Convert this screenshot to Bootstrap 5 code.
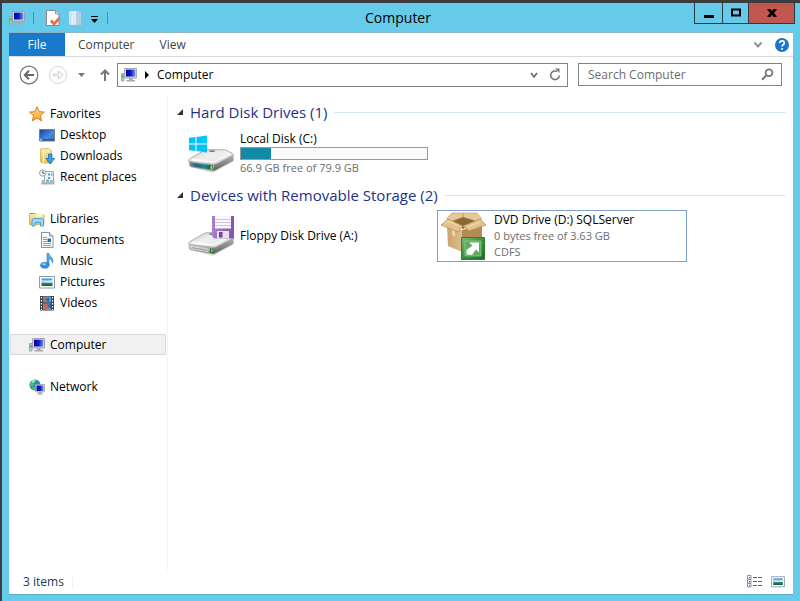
<!DOCTYPE html>
<html lang="en">
<head>
<meta charset="utf-8">
<meta name="viewport" content="width=device-width, initial-scale=1">
<title>Computer</title>
<link href="https://cdn.jsdelivr.net/npm/bootstrap@5.3.0/dist/css/bootstrap.min.css" rel="stylesheet">
<style>
  body { font: 12px/16px "Open Sans", "Noto Sans", sans-serif; background: #3c3c3e; color: #000; }
  .explorer { min-height: 100vh; padding: 3px 0 0 2px; }
  .frame { background: #66cbea; padding: 0 7px 7px; }
  .titlebar { height: 29px; margin-right: -2px; }
  .titlebar h1 { font-size: 14px; line-height: 29px; padding-right: 8px; }
  .titleside { flex: 1 1 0; }
  .quick { gap: 8px; }
  .tool, .plain { border: 0; padding: 0; background: none; display: flex; }
  .sep { width: 1px; height: 12px; background: #60889a; }
  .caption { height: 21px; border: 1px solid #2c3a40; border-top: 0; }
  .caption button { border: 0; background: #66cbea; width: 27px; padding: 0; }
  .caption button + button { border-left: 1px solid #2c3a40; width: 26px; }
  .caption button.shut { background: #c2574f; width: 46px; }
  .pane { background: #fff; border-top: 1px solid #8bb4c4; box-shadow: 0 1px 0 #57a9c4; }
  .ribbon { height: 24px; border-bottom: 1px solid #dadbdc; }
  .ribbon a { line-height: 24px; color: #444; text-decoration: none; padding: 0 12px 0 13px; }
  .ribbon a.file { background: #1979ca; color: #fff; width: 56px; height: 23px; padding: 0; text-align: center; }
  .addressrow { padding: 6px 11px 8px 10px; gap: 10px; }
  .navbtns { height: 24px; gap: 10px; margin-right: -3px; }
  .addr { border: 1px solid #828282; height: 24px; padding: 0 6px 0 3px; gap: 7px; }
  .find { border: 1px solid #828282; height: 23px; width: 204px; padding: 0 7px 0 9px; }
  .find input { border: 0; outline: 0; padding: 0; min-width: 0; color: #000; background: none; }
  .find input::placeholder { color: #6d6d6d; opacity: 1; }
  .side { width: 159px; border-right: 1px solid #f2f2f2; padding: 8px 1px 0; }
  .side ul { margin: 0 0 21px; padding: 0; list-style: none; }
  .side a { display: flex; align-items: center; gap: 5px; height: 21px; padding-left: 18px; color: #000; text-decoration: none; border: 1px solid transparent; }
  .side ul ul { margin: 0; }
  .side ul ul a { padding-left: 28px; }
  .side a.current { background: #f1f1f1; border-color: #d9d9d9; }
  .files { padding: 6px 7px 0 8px; }
  .group { font-size: 15px; line-height: 22px; color: #1e3287; gap: 6px; }
  .group::after { content: ""; flex: 1; height: 1px; background: #d8e8f2; margin-left: 1px; }
  .items { display: grid; grid-template-columns: repeat(auto-fill, 250px); padding-left: 11px; margin: 4px 0 5px; }
  .drive { height: 52px; color: #000; text-decoration: none; border: 1px solid transparent; gap: 5px; padding-right: 8px; }
  .drive.picked { border-color: #7da2ce; gap: 8px; }
  .drive svg.big { margin-left: -1px; }
  .drive.picked svg.big { margin-left: 3px; }
  .soft { color: #6d6d6d; }
  .drive .soft { font-size: 11px; }
  .meter { height: 13px; border: 1px solid #999; border-radius: 0; background: #fafafa; }
  .meter .progress-bar { background: #118aa8; }
  .foot { height: 24px; padding: 0 8px 0 14px; color: #1e395b; }
  .foot .sep { background: #eee; height: 11px; }
</style>
<script src="https://cdn.jsdelivr.net/npm/bootstrap@5.3.0/dist/js/bootstrap.bundle.min.js"></script>
</head>
<body>
<svg width="0" height="0" class="position-absolute" aria-hidden="true">
  <defs>
    <linearGradient id="screen" x1="0" y1="0" x2="1" y2="0"><stop offset="0" stop-color="#0808a0"/><stop offset=".5" stop-color="#0a16c8"/><stop offset="1" stop-color="#6f93ee"/></linearGradient>
    <linearGradient id="desk" x1="0" y1="0" x2="1" y2="1"><stop offset="0" stop-color="#153d9c"/><stop offset=".6" stop-color="#4a8be0"/><stop offset="1" stop-color="#2c60bd"/></linearGradient>
    <linearGradient id="gold" x1="0" y1="0" x2="0" y2="1"><stop offset="0" stop-color="#fdf0ae"/><stop offset="1" stop-color="#e2bd55"/></linearGradient>
    <linearGradient id="starfill" x1="0" y1="0" x2="0" y2="1"><stop offset="0" stop-color="#ffe88c"/><stop offset="1" stop-color="#fb9a22"/></linearGradient>
    <linearGradient id="sky" x1="0" y1="0" x2="0" y2="1"><stop offset="0" stop-color="#2382dd"/><stop offset=".5" stop-color="#c9eefb"/><stop offset=".6" stop-color="#338860"/><stop offset="1" stop-color="#125a48"/></linearGradient>
    <linearGradient id="casetop" x1="0" y1="0" x2="1" y2="1"><stop offset="0" stop-color="#c9c9c9"/><stop offset=".5" stop-color="#f4f4f4"/><stop offset="1" stop-color="#c4c4c4"/></linearGradient>
    <linearGradient id="caseside" x1="0" y1="0" x2="0" y2="1"><stop offset="0" stop-color="#d8d8d8"/><stop offset="1" stop-color="#808080"/></linearGradient>
    <linearGradient id="caseright" x1="0" y1="0" x2="0" y2="1"><stop offset="0" stop-color="#b4b4b4"/><stop offset="1" stop-color="#606060"/></linearGradient>
    <linearGradient id="teal" x1="0" y1="0" x2="1" y2="0"><stop offset="0" stop-color="#6d7f94"/><stop offset=".3" stop-color="#2d6078"/><stop offset=".65" stop-color="#179096"/><stop offset="1" stop-color="#164f35"/></linearGradient>
    <linearGradient id="purple" x1="0" y1="0" x2="1" y2="0"><stop offset="0" stop-color="#a982ce"/><stop offset="1" stop-color="#8453b0"/></linearGradient>
    <linearGradient id="cardL" x1="0" y1="0" x2="1" y2="0"><stop offset="0" stop-color="#c9a26a"/><stop offset="1" stop-color="#dfbf8d"/></linearGradient>
    <linearGradient id="green" x1="0" y1="0" x2="1" y2="1"><stop offset="0" stop-color="#7cbd79"/><stop offset=".5" stop-color="#3a8f3d"/><stop offset="1" stop-color="#1d6b24"/></linearGradient>
    <symbol id="pc" viewBox="0 0 16 16">
      <path d="M0.500 6.500h2.500v7.500h-2.500z" fill="#c5c9cb" stroke="#8a8f92" stroke-width=".7"/><path d="M1 8h1.500v2.500h-1.500z" fill="#35c435"/>
      <path d="M3.500 1.500h12v9.500h-12z" fill="#d5d6da" stroke="#96989f" stroke-width=".8"/><path d="M5 2.700h9.300v6.800H5z" fill="url(#screen)"/>
      <path d="M8 11h3.500v2H14v1.500H5.500V13H8z" fill="#a7a9ac"/>
    </symbol>
    <symbol id="star" viewBox="0 0 16 16"><path d="M8 .8l2.100 4.900 5.300.4-4 3.500 1.300 5.300L8 12l-4.700 2.900 1.300-5.300-4-3.500 5.300-.4z" fill="url(#starfill)" stroke="#e0792e" stroke-linejoin="round"/></symbol>
    <symbol id="desktop" viewBox="0 0 16 16"><path d="M.5 2.500h15v11.500H.5z" fill="url(#desk)" stroke="#707f92"/><path d="M1 12h14v1.500H1z" fill="#3f5271"/><path d="M1 12h2v1.500H1z" fill="#a0d6e9"/></symbol>
    <symbol id="down" viewBox="0 0 16 16"><path d="M1.500 1l8-.5 3 2V15H4l-2.500-1z" fill="url(#gold)" stroke="#d3b057" stroke-width=".8"/><path d="M5 2.500L4.500 15" stroke="#fff6cd"/><path d="M9.500 6h3.500v4.500h2.500L11.300 16 7 10.500h2.500z" fill="#37a3ec" stroke="#1768b3" stroke-width=".8"/></symbol>
    <symbol id="recent" viewBox="0 0 16 16"><path d="M5.500 2.500h9V12h-9z" fill="#eef4f7" stroke="#9cabb4"/><path d="M9 4.500h2v2H9zm3 0h1.500v2H12zM9 8h2v2H9z" fill="#5b9cc9"/><path d="M3 11h12.500v4.500H2z" fill="#aeb5ba"/><path d="M6 10h5v3H6z" fill="#fff"/><path d="M7 10.800h3v1.700H7z" fill="#3ba8aa"/><circle cx="3.700" cy="4" r="3.200" fill="#f3f6f7" stroke="#97a5ae"/><path d="M3.700 2v2.200h2" fill="none" stroke="#54626e"/></symbol>
    <symbol id="library" viewBox="0 0 16 16"><path d="M.5 2.500h6l1 1.500h7.500v9.500H.5z" fill="url(#gold)" stroke="#d4b150" stroke-width=".9"/><path d="M1.500 2.500h3" stroke="#5aa84c"/><path d="M7 4.500h6.500" stroke="#fff8d8" stroke-width="2"/><path d="M3 15V9.500Q3 7.500 5 7.500h7.500Q14.500 7.500 14.500 9.500V15h-3v-3.500h-5.500V15z" fill="#9bd4f2" stroke="#4b9dd0" stroke-width=".9"/></symbol>
    <symbol id="doc" viewBox="0 0 16 16"><path d="M2.500.5h8l3.500 3.500v11.500H2.500z" fill="#fff" stroke="#8192a3"/><path d="M10.500.5V4H14" fill="#d7e0e9" stroke="#8192a3"/><path d="M4 5.500h4M4 7.500h4M4 9.500h4M4 11.500h8M4 13.500h8" stroke="#7290b7" stroke-width=".9"/><path d="M8.500 6.500H12V10H8.500z" fill="#2c69b8"/></symbol>
    <symbol id="music" viewBox="0 0 16 16"><path d="M8 .5h2c0 3 5 4 3.500 9.500-.3-2.500-1.500-4-3.500-4.500v6.500H8z" fill="#59a9e5" stroke="#2784c7" stroke-width=".7"/><ellipse cx="5.800" cy="12.300" rx="4.300" ry="3" fill="#2f91dc" stroke="#1974bb" stroke-width=".5"/><ellipse cx="5" cy="11.300" rx="2" ry="1" fill="#9dd5f7"/></symbol>
    <symbol id="picture" viewBox="0 0 16 16"><path d="M.5 2.500h15v11.500H.5z" fill="#fff" stroke="#8d99a7"/><path d="M2.500 4.500h11V12h-11z" fill="url(#sky)"/><path d="M2.500 6l5 2.500 6-1V5.500L9 7z" fill="#effaff" opacity=".6"/></symbol>
    <symbol id="video" viewBox="0 0 16 16"><path d="M1 1h14v14.500H1z" fill="#39414a"/><path d="M4 1.500h8v6H4zM4 8.500h8v6.500H4z" fill="#4ba0e0"/><path d="M4 1.500l4 2 3-1.500-2 5H4zM4 10l4-1.500 4 3-4 3.500H4z" fill="#ca684b"/><path d="M6 4l4-1v4zM8 10l4-1v5z" fill="#2464b3"/><path d="M2.500 2v13M13.500 2v13" stroke="#fff" stroke-dasharray="1.500 1.500" stroke-width="1.200"/></symbol>
    <symbol id="net" viewBox="0 0 16 16"><circle cx="6" cy="6" r="5.500" fill="#2688d4"/><path d="M2 2.500Q5 0 8 1L6 3.500 4.500 4 5 6 2.500 7.500.5 6.500Q.5 4 2 2.500zM4 8l3 1-1.500 2.500Q3 11 2.500 9z" fill="#55c445"/><path d="M3 2l2-1 1 1-2 2z" fill="#d3f3ff"/><path d="M6.500 5.500h9V13h-9z" fill="#dfe3e8" stroke="#8d949c" stroke-width=".7"/><path d="M7.500 6.500h7V12h-7z" fill="url(#screen)"/><path d="M10 13h2v1.500h2v1H8v-1h2z" fill="#9a9fa4"/></symbol>
    <symbol id="base" viewBox="0 0 48 48">
      <path d="M3 38l23 6 21-12V29L26 40z" fill="#888" opacity=".3"/>
      <path d="M1.500 31.500Q12 34 27 35.500V42L4 38.200Q1.800 37.500 1.500 35z" fill="url(#caseside)"/>
      <path d="M27 35.500L46.500 26v4q0 1.500-1 2.200L27 42z" fill="url(#caseright)"/>
      <path d="M1.500 31.500Q2 30 4 29L17 21.500Q18.500 20.700 20 20.700H37Q38.500 20.700 40 21.500L45.500 24.500Q47 25.500 46 26.500L30 34.800Q28.500 35.600 26.500 35.500L3 32.500Q1.500 32.300 1.500 31.500z" fill="url(#casetop)" stroke="#909090" stroke-width=".7"/>
      <path d="M5 30.500L24.500 32.800Q26.500 33 28 32.200L43 24.500" fill="none" stroke="#fff" stroke-width="1.300"/>
      <path d="M21 22.500h15l4 2-14 6.500-16-1.500z" fill="#ececec" opacity=".8"/>
      <path d="M22.500 21.500h5v1.300h-5z" fill="#606060"/>
    </symbol>
  </defs>
</svg>

<div class="explorer d-flex flex-column">
 <div class="frame flex-grow-1 d-flex flex-column">
  <header class="titlebar d-flex align-items-start">
    <div class="titleside quick d-flex align-items-center h-100">
      <svg width="16" height="16"><use href="#pc"/></svg>
      <span class="sep me-1"></span>
      <button class="tool" aria-label="Properties"><svg width="15" height="16" viewBox="1 0 15 16"><path d="M1.500.5h9L14 4v11.500H1.500z" fill="#fff" stroke="#8d8585"/><path d="M10.500.5V4H14" fill="#ddd" stroke="#999"/><path d="M6 10.500l3 3.500L14.500 8" fill="none" stroke="#ec7044" stroke-width="2.800"/></svg></button>
      <button class="tool" aria-label="New folder"><svg width="13" height="16" viewBox="1 0 13 16"><path d="M1 1h6l6 1v13H3L1 14z" fill="#d0e2f2"/><path d="M5 2l-1 13M7 1v13" stroke="#f2f8fc"/><path d="M8 2h5v13H8z" fill="#b8cde2"/></svg></button>
      <button class="tool" aria-label="Customize"><svg width="9" height="16" viewBox="0 0 9 16"><path d="M1 6.500h7" stroke="#000"/><path d="M1 9h7l-3.500 4z"/></svg></button>
      <span class="sep"></span>
    </div>
    <h1 class="m-0 fw-normal">Computer</h1>
    <div class="titleside d-flex justify-content-end">
      <div class="caption d-flex">
        <button aria-label="Minimize"><svg class="d-block mx-auto" width="12" height="12"><path d="M1 8h10v3H1z"/></svg></button>
        <button aria-label="Maximize"><svg class="d-block mx-auto" width="12" height="12"><path d="M2 2.500h8v6H2z" fill="none" stroke="#000" stroke-width="2"/></svg></button>
        <button class="shut" aria-label="Close"><svg class="d-block mx-auto" width="12" height="12" viewBox="0 0 12 12"><path d="M1.500 2h3L6 4.300 7.500 2h3v1L8 6l2.500 3v1h-3L6 7.700 4.500 10h-3V9L4 6 1.500 3z"/></svg></button>
      </div>
    </div>
  </header>

  <div class="pane flex-grow-1 d-flex flex-column">
    <nav class="ribbon d-flex align-items-start">
      <a class="file" href="#">File</a><a href="#">Computer</a><a href="#">View</a>
      <button class="plain ms-auto align-self-center" aria-label="Expand ribbon"><svg width="10" height="8"><path d="M1.500 1.500L5 5.500 8.500 1.500" fill="none" stroke="#929292" stroke-width="2"/></svg></button>
      <button class="plain align-self-center ms-2 me-1 ps-1" aria-label="Help"><svg width="14" height="14" viewBox="0 0 14 14"><circle cx="7" cy="7" r="7" fill="#1878cf"/><path d="M4.800 5Q4.800 2.800 7.100 2.800T9.300 4.900Q9.300 6 8.100 6.700 7.100 7.300 7.100 8.500M7.100 9.900v1.900" fill="none" stroke="#fff" stroke-width="1.700"/></svg></button>
    </nav>

    <div class="addressrow d-flex align-items-start">
      <div class="navbtns d-flex align-items-center flex-shrink-0">
        <button class="plain" aria-label="Back"><svg width="20" height="20" viewBox="0 0 20 20"><circle cx="10" cy="10" r="8.800" fill="none" stroke="#777" stroke-width="1.200"/><path d="M15 10H6M10 5.800L5.800 10l4.200 4.200" fill="none" stroke="#666" stroke-width="2"/></svg></button>
        <button class="plain" aria-label="Forward"><svg class="d-block" width="18" height="20" viewBox="1 0 18 20"><circle cx="10" cy="10" r="8.500" fill="none" stroke="#d6d6d6"/><path d="M5.500 9h5V6l4.500 4-4.500 4v-3h-5z" fill="none" stroke="#d0d0d0"/></svg></button>
        <button class="plain" aria-label="Recent locations"><svg width="9" height="6"><path d="M1 1h7L4.500 5z" fill="#777"/></svg></button>
        <button class="plain ps-1" aria-label="Up"><svg width="10" height="14" viewBox="0 0 10 14"><path d="M5 13V3M1 6.500l4-4 4 4" fill="none" stroke="#777" stroke-width="2"/></svg></button>
      </div>
      <div class="addr flex-grow-1 d-flex align-items-center">
        <svg width="16" height="16"><use href="#pc"/></svg>
        <svg width="6" height="8"><path d="M1 0l4 4-4 4z"/></svg>
        <span>Computer</span>
        <button class="plain ms-auto me-1" aria-label="Previous locations"><svg width="8" height="8"><path d="M1 2l3 4 3-4" fill="none" stroke="#666" stroke-width="1.600"/></svg></button>
        <button class="plain" aria-label="Refresh"><svg width="12" height="14" viewBox="0 0 12 14"><path d="M8 3.500A4.300 4.300 0 1 0 10.300 7.500" fill="none" stroke="#777" stroke-width="1.600"/><path d="M6 0.500h4.500V5z" fill="#777"/></svg></button>
      </div>
      <label class="find d-flex align-items-center">
        <input class="flex-grow-1" type="search" placeholder="Search Computer" aria-label="Search Computer">
        <svg width="13" height="13" viewBox="0 0 13 13"><circle cx="8" cy="4.700" r="3.400" fill="none" stroke="#777" stroke-width="1.800"/><path d="M5.500 7.200L1 11.700" stroke="#777" stroke-width="2.200"/></svg>
      </label>
    </div>

    <div class="flex-grow-1 d-flex">
      <nav class="side flex-shrink-0" aria-label="Locations">
        <ul>
          <li><a href="#"><svg width="16" height="16"><use href="#star"/></svg>Favorites</a>
            <ul>
              <li><a href="#"><svg width="16" height="16"><use href="#desktop"/></svg>Desktop</a></li>
              <li><a href="#"><svg width="16" height="16"><use href="#down"/></svg>Downloads</a></li>
              <li><a href="#"><svg width="16" height="16"><use href="#recent"/></svg>Recent places</a></li>
            </ul></li>
        </ul>
        <ul>
          <li><a href="#"><svg width="16" height="16"><use href="#library"/></svg>Libraries</a>
            <ul>
              <li><a href="#"><svg width="16" height="16"><use href="#doc"/></svg>Documents</a></li>
              <li><a href="#"><svg width="16" height="16"><use href="#music"/></svg>Music</a></li>
              <li><a href="#"><svg width="16" height="16"><use href="#picture"/></svg>Pictures</a></li>
              <li><a href="#"><svg width="16" height="16"><use href="#video"/></svg>Videos</a></li>
            </ul></li>
        </ul>
        <ul><li><a class="current" href="#"><svg width="16" height="16"><use href="#pc"/></svg>Computer</a></li></ul>
        <ul><li><a href="#"><svg width="16" height="16"><use href="#net"/></svg>Network</a></li></ul>
      </nav>

      <main class="files flex-grow-1">
        <h2 class="group d-flex align-items-center m-0 fw-normal"><svg width="8" height="8"><path d="M7 1v6H1z" fill="#333"/></svg>Hard Disk Drives (1)</h2>
        <div class="items">
          <a class="drive d-flex align-items-center" href="#">
            <svg class="big flex-shrink-0" width="48" height="48" viewBox="0 0 48 48"><use href="#base"/><path d="M3 33Q12 35 25.500 36.300V40.800L5 37.500Q3.200 37 3 35.500z" fill="url(#teal)"/><path d="M24.300 36.500v4" stroke="#8cf33d" stroke-width="1.600"/><path d="M2 8.700L8.500 8V14.500H2zM9.500 7.900L20 6.500v8H9.500zM2 15.500h6.500V22L2 21.300zM9.500 15.500H20v8L9.500 22.100z" fill="#00c3f7"/></svg>
            <span class="flex-grow-1"><span class="d-block">Local Disk (C:)</span>
              <span class="progress meter" role="progressbar" aria-label="Space used" aria-valuenow="16" aria-valuemin="0" aria-valuemax="100"><span class="progress-bar" style="width:16%"></span></span>
              <span class="d-block soft">66.9 GB free of 79.9 GB</span></span>
          </a>
        </div>
        <h2 class="group d-flex align-items-center m-0 fw-normal"><svg width="8" height="8"><path d="M7 1v6H1z" fill="#333"/></svg>Devices with Removable Storage (2)</h2>
        <div class="items">
          <a class="drive d-flex align-items-center" href="#">
            <svg class="big flex-shrink-0" width="48" height="48" viewBox="0 0 48 48"><use href="#base"/><path d="M4 34.500l17 2.500v2.500L5 37z" fill="#a2a2a2" stroke="#eee" stroke-width=".7"/><path d="M23 36.200l3.500.3v5l-3.500-.5z" fill="#2a4c2c"/><path d="M24.700 36.500v4" stroke="#3df03d" stroke-width="1.800"/><path d="M25 4h22v22.500H27L25 24z" fill="url(#purple)"/><path d="M28 4h16v12.500H28z" fill="#f7f7fb"/><path d="M28 7.500h16M28 10.500h16M28 13.500h16" stroke="#ccc9dd"/><path d="M30 19h12v7.500H30z" fill="#e2e0e8"/><path d="M32 20h3.500v5.500H32z" fill="#71468f"/></svg>
            <span>Floppy Disk Drive (A:)</span>
          </a>
          <a class="drive picked d-flex align-items-center" href="#">
            <svg class="big flex-shrink-0" width="45" height="48" viewBox="0 0 45 48">
              <path d="M6 13l15 5v22L7 34z" fill="url(#cardL)"/><path d="M21 18l20-5v21l-20 6z" fill="#b48b50"/>
              <path d="M7 6l15-3 18 4-18 10z" fill="#8d6637"/><path d="M11 16l3 1v8l-3-2z" fill="#ecd5ab"/>
              <path d="M6 6L11 1h11v4L9 10zM22 5V1h14l5 6-6 2z" fill="#e5c99b" stroke="#bd985c" stroke-width=".6"/>
              <path d="M0 13l7-6 15 7-5 6zM22 14l17-7 6 6-17 6z" fill="#e2c28d" stroke="#b38b51" stroke-width=".7"/>
              <path d="M3 12.500l4-3.500 11 5M27 15l12-5" fill="none" stroke="#f3dfbb"/>
              <path d="M20.500 25.500h23v22h-23z" fill="url(#green)" stroke="#2c7d33"/><path d="M24 29h16v15H24z" fill="#5fab5f" stroke="#9cce99" stroke-width=".7"/>
              <path d="M28 30.500h10v10l-3-3-4 5.500-5.500-.5V38l6-4.500z" fill="#fff"/>
            </svg>
            <span><span class="d-block">DVD Drive (D:) SQLServer</span><span class="d-block soft">0 bytes free of 3.63 GB</span><span class="d-block soft">CDFS</span></span>
          </a>
        </div>
      </main>
    </div>

    <footer class="foot d-flex align-items-center">
      <span>3 items</span><span class="sep ms-2"></span>
      <button class="plain ms-auto me-2" aria-label="Details view"><svg width="16" height="14" viewBox="0 0 16 14"><g fill="#fff" stroke="#8793a5"><path d="M.5.500h3.500v3.500H.500zM.5 4.500h3.500v3.500H.500zM.5 8.500h3.500v3.500H.500z"/></g><path d="M2 2h1v1H2z" fill="#299443"/><path d="M2 6h1v1H2z" fill="#ce2929"/><path d="M2 10h1v1H2z" fill="#245eb8"/><path d="M6 2.500h4m1 0h4M6 6.500h4m1 0h4M6 10.500h4m1 0h4" stroke="#526080"/></svg></button>
      <button class="plain" aria-label="Large icons view"><svg width="14" height="14" viewBox="0 1 16 15"><use href="#picture" width="16" height="16"/></svg></button>
    </footer>
  </div>
 </div>
</div>
</body>
</html>
